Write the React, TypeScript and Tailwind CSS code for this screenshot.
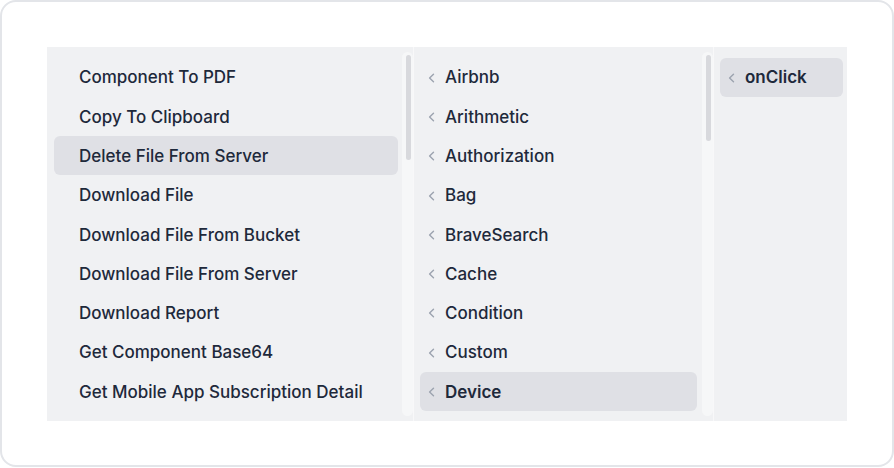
import React from "react";

const col1 = [
  "Component To PDF",
  "Copy To Clipboard",
  "Delete File From Server",
  "Download File",
  "Download File From Bucket",
  "Download File From Server",
  "Download Report",
  "Get Component Base64",
  "Get Mobile App Subscription Detail",
];

const col2 = [
  "Airbnb",
  "Arithmetic",
  "Authorization",
  "Bag",
  "BraveSearch",
  "Cache",
  "Condition",
  "Custom",
  "Device",
];

function Chevron() {
  return (
    <svg width="7" height="10" viewBox="0 0 7 10" className="shrink-0 mb-[1px]">
      <path d="M5.5 1.2 L1.6 5 L5.5 8.8" fill="none" stroke="#9ca3af" strokeWidth="1.4" strokeLinecap="round" strokeLinejoin="round" />
    </svg>
  );
}

function Scroll({ thumb }: { thumb: string }) {
  return (
    <div className="w-[11px] shrink-0 py-[5px]">
      <div className="h-full rounded-full bg-[#f6f7f8] pl-[4px] pr-[2px] pt-[3px]">
        <div className={`${thumb} w-[5px] rounded-full bg-[#d8d9dd]`} />
      </div>
    </div>
  );
}

export default function App() {
  return (
    <div className="w-[894px] h-[468px] bg-white" style={{ fontFamily: "Inter, 'Noto Sans', sans-serif" }}>
      <div className="w-[894px] h-[467px] rounded-[16px] border-2 border-[#e3e5e9] pl-[45px] pt-[45px]">
        <div className="flex w-[800px] h-[374px] bg-[#f0f1f3] overflow-hidden">
          <div className="flex w-[367px] border-r border-[#f8f8f9]">
            <div className="flex-1 pl-[7px] pr-[4px] pt-[10.5px]">
              {col1.map((t) => (
                <div
                  key={t}
                  className={`h-[39.3px] flex items-center pl-[25px] pt-[2px] rounded-[6px] text-[17px] font-medium text-[#1e293b] ${t === "Delete File From Server" ? "bg-[#dfe0e5]" : ""}`}
                >
                  {t}
                </div>
              ))}
            </div>
            <Scroll thumb="h-[105px]" />
          </div>
          <div className="flex w-[300px] border-r border-[#f8f8f9]">
            <div className="flex-1 pl-[6px] pr-[5px] pt-[10.5px]">
              {col2.map((t) => (
                <div
                  key={t}
                  className={`h-[39.3px] flex items-center gap-[10px] pl-[8px] pt-[2px] rounded-[6px] text-[17px] text-[#1e293b] ${t === "Device" ? "bg-[#dfe0e5] font-semibold" : "font-medium"}`}
                >
                  <Chevron />
                  {t}
                </div>
              ))}
            </div>
            <Scroll thumb="h-[86px]" />
          </div>
          <div className="flex-1 pl-[6px] pr-[4px] pt-[10.5px]">
            <div className="h-[39.3px] flex items-center gap-[10px] pl-[8px] pt-[2px] rounded-[6px] bg-[#dfe0e5] text-[17px] font-semibold text-[#1e293b]">
              <Chevron />
              onClick
            </div>
          </div>
        </div>
      </div>
    </div>
  );
}
